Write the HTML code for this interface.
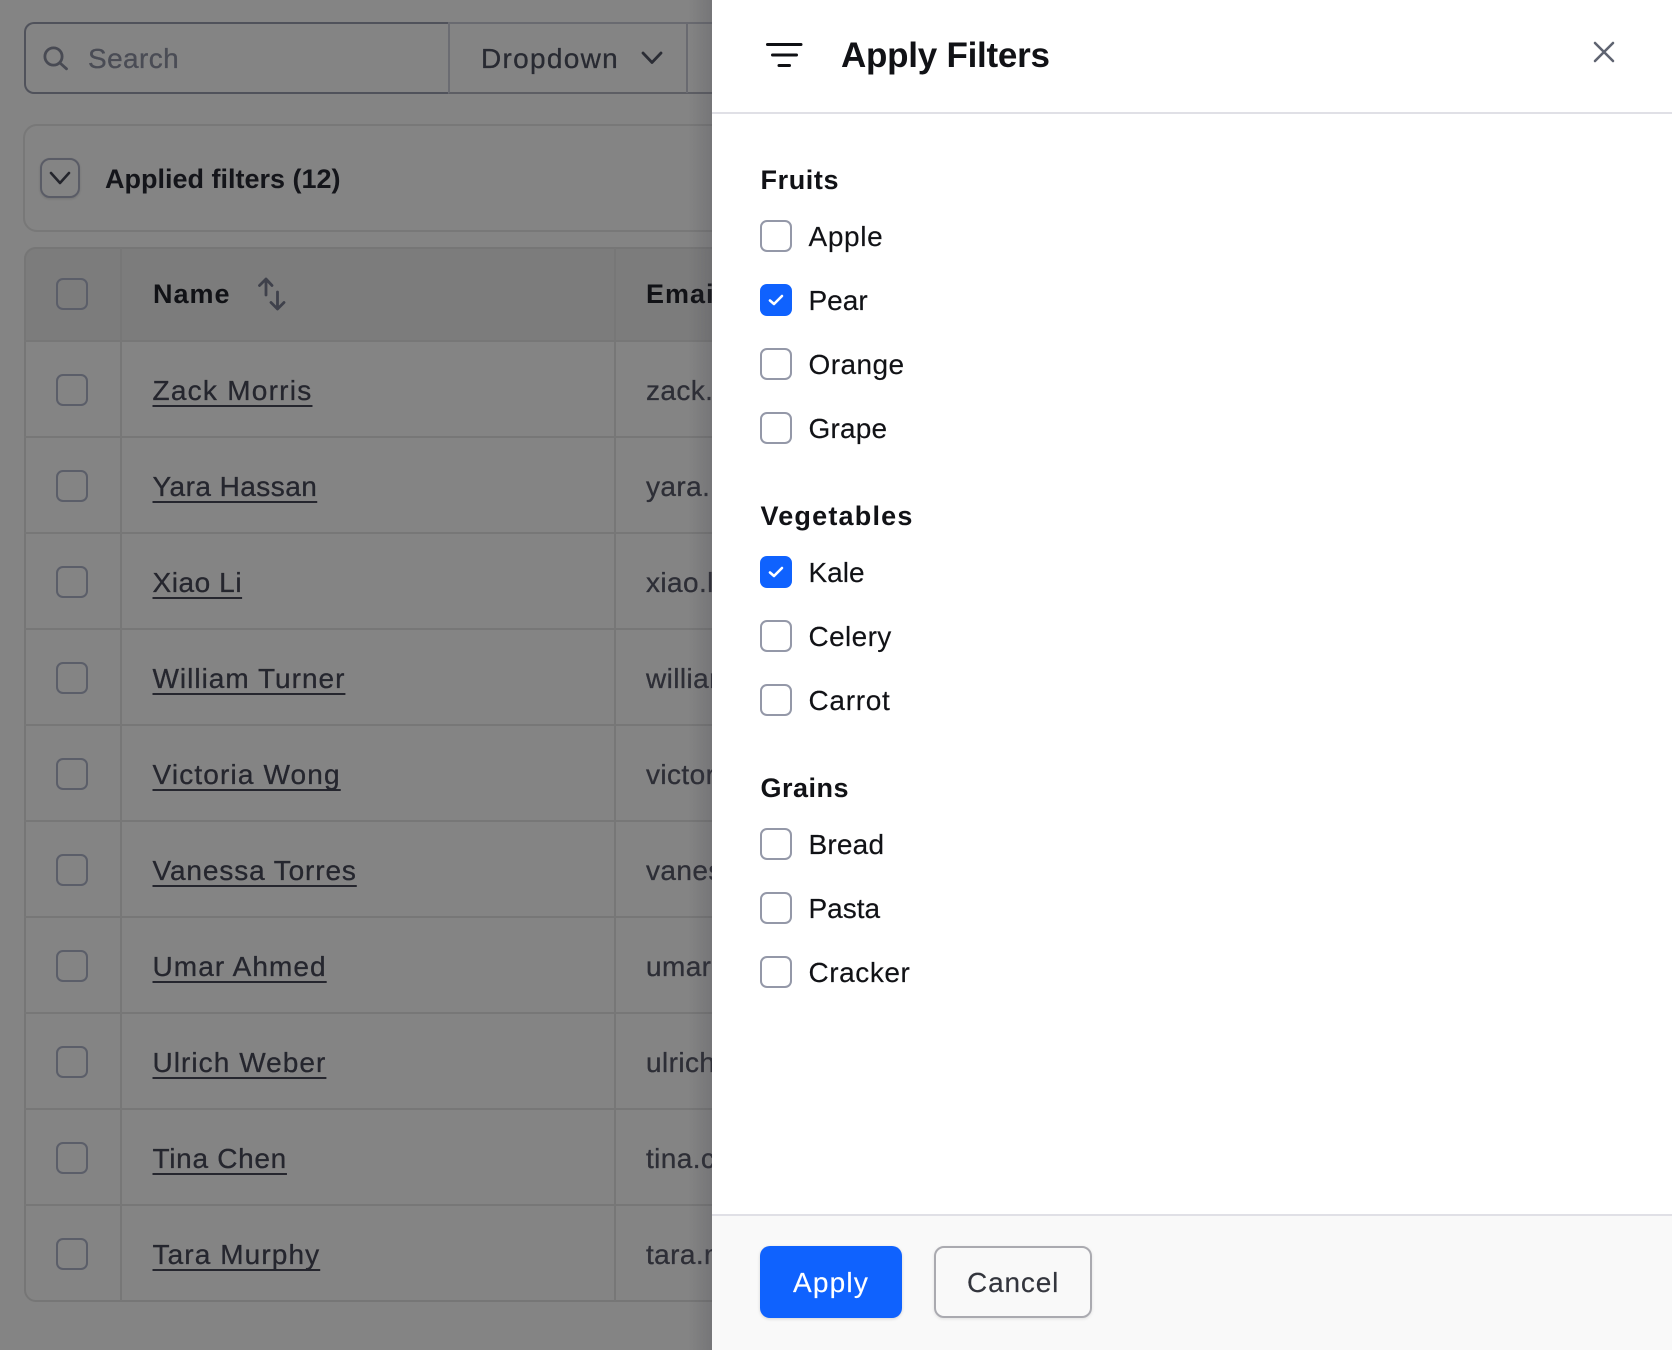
<!DOCTYPE html>
<html><head><meta charset="utf-8"><title>Apply Filters</title>
<style>
html,body{margin:0;padding:0}
body{position:relative;width:1672px;height:1350px;overflow:hidden;background:#848484;font-family:"Liberation Sans",Arial,sans-serif}
.a{position:absolute}
.t{position:absolute;line-height:40px;font-size:28px;white-space:nowrap;color:#111216;-webkit-text-stroke:.15px currentColor}
.b{font-weight:700;font-size:27px;-webkit-text-stroke:0}
.n{left:152.500px;color:#25262e;-webkit-text-stroke:.3px #25262e;text-decoration:underline;text-decoration-thickness:2px;text-underline-offset:5px;text-decoration-skip-ink:none}
.e{left:646px;color:#2d2e36;-webkit-text-stroke:.3px #2d2e36;letter-spacing:.4px}
.c{position:absolute;box-sizing:border-box;width:32px;height:32px;border:2px solid #5b5e69;border-radius:7px}
.p{position:absolute;box-sizing:border-box;left:760px;width:32px;height:32px;border:2px solid #9498a8;border-radius:7px;background:#fff}
.k{position:absolute;left:760px;width:32px;height:32px;border-radius:7px;background:#0f62fe}
.k svg{display:block}
.l{left:808.500px;top:0}
.h{position:absolute;left:24px;width:690px;height:2px;background:#777}
</style></head>
<body>
<!-- toolbar -->
<div class="a" style="left:24px;top:22px;box-sizing:border-box;width:425px;height:72px;border:2px solid #50525b;border-right:0;border-radius:10px 0 0 10px"></div>
<div class="a" style="left:448px;top:22px;box-sizing:border-box;width:270px;height:72px;border-top:2px solid #696a70;border-bottom:2px solid #5d5e64;border-left:2px solid #6b6c72"></div>
<div class="a" style="left:686px;top:23px;width:2px;height:70px;background:#696a70"></div>
<svg class="a" style="left:40px;top:42px" width="32" height="32" fill="none" stroke="#484a53" stroke-width="2.8" stroke-linecap="round"><circle cx="13.500" cy="14.500" r="8.600"/><path d="M20 21L26.500 26.800"/></svg>
<div class="t" style="left:88px;top:39px;color:#4a4c55;-webkit-text-stroke:.3px #4a4c55;letter-spacing:.4px">Search</div>
<div class="t" style="left:481px;top:39px;color:#282a32;-webkit-text-stroke:.3px #282a32;letter-spacing:1.3px">Dropdown</div>
<svg class="a" style="left:640px;top:50px" width="24" height="16" fill="none" stroke="#2b2d35" stroke-width="2.800" stroke-linecap="round" stroke-linejoin="round"><path d="M3 3l9 9.500L21 3"/></svg>

<!-- applied filters -->
<div class="a" style="left:23px;top:124px;box-sizing:border-box;width:720px;height:108px;border:2px solid #787878;border-radius:14px"></div>
<div class="a" style="left:40px;top:158px;box-sizing:border-box;width:40px;height:40px;border:2px solid #5a5c66;border-radius:10px;box-shadow:0 1px 2px rgba(0,0,0,.12)"></div>
<svg class="a" style="left:48px;top:170px" width="24" height="16" fill="none" stroke="#24252c" stroke-width="2.600" stroke-linecap="round" stroke-linejoin="round"><path d="M3 3l9 10 9-10"/></svg>
<div class="t b" style="left:105px;top:159px;color:#14151a">Applied filters (12)</div>

<!-- table -->
<div class="a" style="left:24px;top:247px;box-sizing:border-box;width:720px;height:95px;background:#7c7c7c;border-radius:12px 0 0 0"></div>
<div class="a" style="left:24px;top:247px;box-sizing:border-box;width:720px;height:1055px;border:2px solid #767676;border-radius:12px"></div>
<div class="a" style="left:120px;top:248px;width:2px;height:1053px;background:#777"></div>
<div class="a" style="left:614px;top:248px;width:2px;height:1053px;background:#777"></div>
<div class="h" style="top:340px"></div><div class="h" style="top:436px"></div><div class="h" style="top:532px"></div><div class="h" style="top:628px"></div><div class="h" style="top:724px"></div><div class="h" style="top:820px"></div><div class="h" style="top:916px"></div><div class="h" style="top:1012px"></div><div class="h" style="top:1108px"></div><div class="h" style="top:1204px"></div>

<div class="c" style="left:56px;top:278px"></div>
<div class="t b" style="left:153px;top:274px;letter-spacing:1px;color:#111216">Name</div>
<svg class="a" style="left:256px;top:275px" width="32" height="38" fill="none" stroke="#3f414b" stroke-width="2.800" stroke-linecap="round" stroke-linejoin="round"><path d="M10 4v16M3.500 10.500L10 4l6 6.500"/><path d="M21.500 17v17M15 27.500l6.500 6.500 6.500-6.500"/></svg>
<div class="t b e" style="top:274px;color:#111216;-webkit-text-stroke:0;letter-spacing:1px">Email</div>

<div class="c" style="left:56px;top:374px"></div><div class="t n" style="top:371px;letter-spacing:1.25px">Zack Morris</div><div class="t e" style="top:371px">zack.morris</div>
<div class="c" style="left:56px;top:470px"></div><div class="t n" style="top:467px;letter-spacing:.45px">Yara Hassan</div><div class="t e" style="top:467px">yara.hassan</div>
<div class="c" style="left:56px;top:566px"></div><div class="t n" style="top:563px;letter-spacing:.57px">Xiao Li</div><div class="t e" style="top:563px">xiao.li</div>
<div class="c" style="left:56px;top:662px"></div><div class="t n" style="top:659px;letter-spacing:1px">William Turner</div><div class="t e" style="top:659px">william.turner</div>
<div class="c" style="left:56px;top:758px"></div><div class="t n" style="top:755px;letter-spacing:1.15px">Victoria Wong</div><div class="t e" style="top:755px">victoria.wong</div>
<div class="c" style="left:56px;top:854px"></div><div class="t n" style="top:851px;letter-spacing:.88px">Vanessa Torres</div><div class="t e" style="top:851px">vanessa.torres</div>
<div class="c" style="left:56px;top:950px"></div><div class="t n" style="top:947px;letter-spacing:1.08px">Umar Ahmed</div><div class="t e" style="top:947px">umar.ahmed</div>
<div class="c" style="left:56px;top:1046px"></div><div class="t n" style="top:1043px;letter-spacing:1.05px">Ulrich Weber</div><div class="t e" style="top:1043px">ulrich.weber</div>
<div class="c" style="left:56px;top:1142px"></div><div class="t n" style="top:1139px;letter-spacing:.7px">Tina Chen</div><div class="t e" style="top:1139px">tina.chen</div>
<div class="c" style="left:56px;top:1238px"></div><div class="t n" style="top:1235px;letter-spacing:1.1px">Tara Murphy</div><div class="t e" style="top:1235px">tara.murphy</div>

<!-- panel shadow -->
<div class="a" style="left:688px;top:0;width:24px;height:1350px;background:linear-gradient(to right,rgba(60,60,70,0),rgba(60,60,70,.2))"></div>

<!-- panel -->
<div class="a" style="left:712px;top:0;width:960px;height:1350px;background:#fff"></div>
<div class="a" style="left:712px;top:112px;width:960px;height:2px;background:#e0e0e6"></div>
<svg class="a" style="left:764px;top:40px" width="40" height="30" fill="none" stroke="#0f1014" stroke-width="3" stroke-linecap="round"><path d="M3.500 4.500H37M8.500 15H32.500M15 25.500H25.500"/></svg>
<div class="t b" style="left:841px;top:36px;font-size:35px;letter-spacing:-.25px">Apply Filters</div>
<svg class="a" style="left:1590px;top:38px" width="28" height="28" fill="none" stroke="#5f6471" stroke-width="2.600" stroke-linecap="round"><path d="M5 5l18 18M23 5L5 23"/></svg>

<div class="t b" style="left:760.500px;top:160px;letter-spacing:.6px">Fruits</div>
<div class="p" style="top:220px"></div><div class="t l" style="top:217px;letter-spacing:.65px">Apple</div>
<div class="k" style="top:284px"><svg width="32" height="32" fill="none" stroke="#fff" stroke-width="2.600" stroke-linecap="round" stroke-linejoin="round"><path d="M10 16.500l4 3.500 8-8"/></svg></div><div class="t l" style="top:281px">Pear</div>
<div class="p" style="top:348px"></div><div class="t l" style="top:345px;letter-spacing:.43px">Orange</div>
<div class="p" style="top:412px"></div><div class="t l" style="top:409px;letter-spacing:.2px">Grape</div>

<div class="t b" style="left:760.500px;top:496px;letter-spacing:1.2px">Vegetables</div>
<div class="k" style="top:556px"><svg width="32" height="32" fill="none" stroke="#fff" stroke-width="2.600" stroke-linecap="round" stroke-linejoin="round"><path d="M10 16.500l4 3.500 8-8"/></svg></div><div class="t l" style="top:553px">Kale</div>
<div class="p" style="top:620px"></div><div class="t l" style="top:617px;letter-spacing:.38px">Celery</div>
<div class="p" style="top:684px"></div><div class="t l" style="top:681px;letter-spacing:.7px">Carrot</div>

<div class="t b" style="left:760.500px;top:768px;letter-spacing:.5px">Grains</div>
<div class="p" style="top:828px"></div><div class="t l" style="top:825px;letter-spacing:.2px">Bread</div>
<div class="p" style="top:892px"></div><div class="t l" style="top:889px">Pasta</div>
<div class="p" style="top:956px"></div><div class="t l" style="top:953px;letter-spacing:.55px">Cracker</div>

<!-- footer -->
<div class="a" style="left:712px;top:1214px;width:960px;height:136px;box-sizing:border-box;border-top:2px solid #e0e0e6;background:#f9f9f9"></div>
<div class="a" style="left:760px;top:1246px;width:142px;height:72px;background:#0f62fe;border-radius:10px;box-shadow:0 1px 3px rgba(0,0,0,.15)"></div>
<div class="t" style="left:793px;top:1263px;color:#fff;letter-spacing:1.2px">Apply</div>
<div class="a" style="left:934px;top:1246px;box-sizing:border-box;width:158px;height:72px;border:2px solid #aaaab0;border-radius:10px;box-shadow:0 1px 3px rgba(0,0,0,.1)"></div>
<div class="t" style="left:967px;top:1263px;color:#33353d;letter-spacing:.85px">Cancel</div>
</body></html>
